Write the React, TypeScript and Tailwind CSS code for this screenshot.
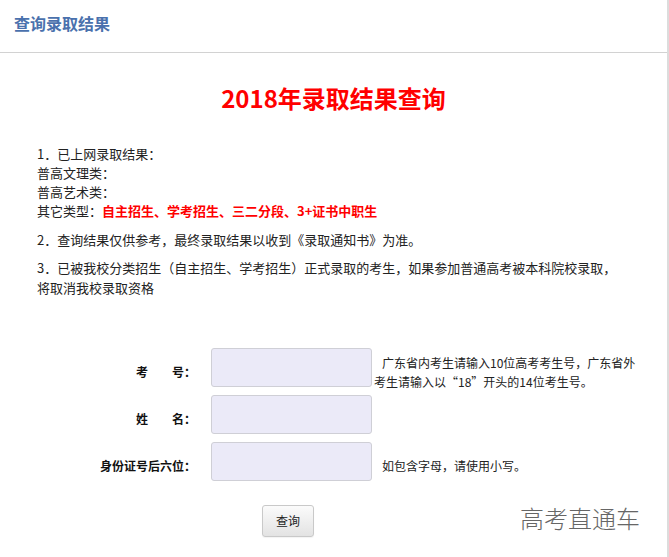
import React from "react";

const font = { fontFamily: '"Noto Sans CJK SC", "Noto Sans", sans-serif' };

function Row({ label, hint, hintIndent }: { label: string; hint?: React.ReactNode; hintIndent?: boolean }) {
  return (
    <div className="flex items-center h-[47px]">
      <div className="w-[120px] text-right text-[12px] font-bold text-[#111] leading-5 whitespace-pre">{label}</div>
      <div className="ml-[15px] mb-2 w-[161px] h-[39px] shrink-0 rounded-[3px] border border-[#cfcfd6] bg-[#ebeaf8]" />
      {hint ? (
        <div className={`ml-[2px] w-[266px] text-[12px] leading-[19px] text-[#222] ${hintIndent ? "" : "pl-[8px]"}`}>{hint}</div>
      ) : null}
    </div>
  );
}

export default function App() {
  return (
    <div className="relative w-[669px] h-[557px] bg-white overflow-hidden" style={font}>
      <div className="w-[669px] h-[557px] border-r-2 border-[#dcdcdc]">
        <div className="h-[53px] border-b border-[#d2d2d2] pl-[14px] pt-[13px]">
          <div className="text-[16px] leading-5 font-bold text-[#4a71ad]">查询录取结果</div>
        </div>
        <div className="mt-[29px] text-center text-[24px] leading-8 font-bold text-[#ff0000]">2018年录取结果查询</div>
        <div className="mt-[30px] pl-[37px] pr-[20px] text-[13px] leading-[19px] text-[#222]">
          <div>
            <div>1．已上网录取结果：</div>
            <div>普高文理类：</div>
            <div>普高艺术类：</div>
            <div>
              其它类型：<span className="font-bold text-[#ff0000]">自主招生、学考招生、三二分段、3+证书中职生</span>
            </div>
          </div>
          <div className="mt-[10px]">2．查询结果仅供参考，最终录取结果以收到《录取通知书》为准。</div>
          <div className="mt-[9px] leading-[20px]">
            3．已被我校分类招生（自主招生、学考招生）正式录取的考生，如果参加普通高考被本科院校录取，
            <br />
            将取消我校录取资格
          </div>
        </div>
        <div className="mt-[50px] pl-[76px]">
          <Row
            label={"考　　号："}
            hintIndent
            hint={
              <>
                <span className="pl-[8px]">广东省内考生请输入10位高考考生号，广东省外</span>
                考生请输入以“18”开头的14位考生号。
              </>
            }
          />
          <Row label={"姓　　名："} />
          <Row label="身份证号后六位：" hint="如包含字母，请使用小写。" />
        </div>
        <div className="mt-[16px] pl-[262px]">
          <button className="w-[52px] h-[32px] rounded-[3px] border border-[#c9c9c9] bg-gradient-to-b from-[#fbfbfb] to-[#e3e3e3] text-[12px] text-[#222] shadow-[0_1px_1px_rgba(0,0,0,0.05)]">
            查询
          </button>
        </div>
      </div>
      <div className="absolute left-[520px] top-[503px] text-[24px] leading-[30px] font-light text-[#666] tracking-[0px]">高考直通车</div>
    </div>
  );
}
